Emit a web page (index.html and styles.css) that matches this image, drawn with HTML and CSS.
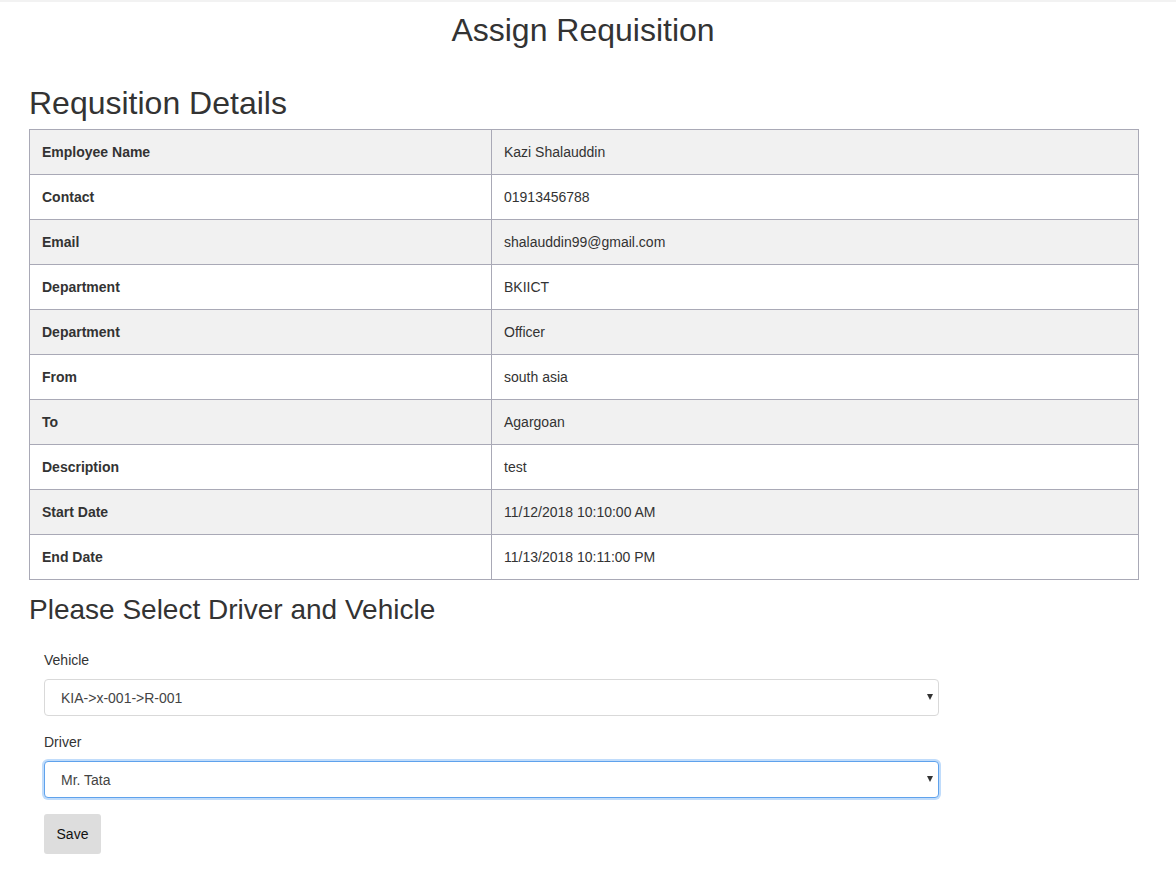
FILE: index.html
```html
<!DOCTYPE html>
<html>
<head>
<meta charset="utf-8">
<title>Assign Requisition</title>
<link rel="stylesheet" href="styles.css">
</head>
<body>
<div class="topbar"></div>
<h1 class="page-title">Assign Requisition</h1>
<div class="container">
  <h2 class="section-title">Requsition Details</h2>
  <table class="details">
    <tbody>
      <tr><th>Employee Name</th><td>Kazi Shalauddin</td></tr>
      <tr><th>Contact</th><td>01913456788</td></tr>
      <tr><th>Email</th><td>shalauddin99@gmail.com</td></tr>
      <tr><th>Department</th><td>BKIICT</td></tr>
      <tr><th>Department</th><td>Officer</td></tr>
      <tr><th>From</th><td>south asia</td></tr>
      <tr><th>To</th><td>Agargoan</td></tr>
      <tr><th>Description</th><td>test</td></tr>
      <tr><th>Start Date</th><td>11/12/2018 10:10:00 AM</td></tr>
      <tr><th>End Date</th><td>11/13/2018 10:11:00 PM</td></tr>
    </tbody>
  </table>
  <h2 class="sub-title">Please Select Driver and Vehicle</h2>
  <form class="assign-form">
    <div class="field">
      <label class="field-label" for="vehicle">Vehicle</label>
      <div class="select-wrap">
        <select id="vehicle" class="select">
          <option>KIA-&gt;x-001-&gt;R-001</option>
        </select>
        <span class="caret"></span>
      </div>
    </div>
    <div class="field">
      <label class="field-label" for="driver">Driver</label>
      <div class="select-wrap">
        <select id="driver" class="select focused">
          <option>Mr. Tata</option>
        </select>
        <span class="caret"></span>
      </div>
    </div>
    <button type="button" class="save-btn">Save</button>
  </form>
</div>
</body>
</html>
```
FILE: styles.css
```css
html, body {
  margin: 0;
  padding: 0;
  background: #fff;
}
body {
  font-family: "Liberation Sans", Arial, sans-serif;
  font-size: 14px;
  color: #333;
}
.topbar {
  height: 2px;
  background: #f2f2f2;
}
.page-title {
  margin: 10px 0 0;
  font-size: 32px;
  line-height: 36px;
  font-weight: normal;
  text-align: center;
  color: #333;
  padding-right: 10px;
}
.container {
  padding-left: 29px;
  width: 1110px;
}
.section-title {
  margin: 37px 0 8px;
  font-size: 32px;
  line-height: 36px;
  font-weight: normal;
  color: #333;
}
.details {
  width: 1110px;
  border-collapse: collapse;
  table-layout: fixed;
}
.details th,
.details td {
  border: 1px solid #a9a9b6;
  padding: 12px 12px;
  line-height: 20px;
  font-size: 14px;
  text-align: left;
  color: #333;
}
.details th {
  width: 437px;
  font-weight: bold;
}
.details tr:nth-child(odd) {
  background: #f1f1f1;
}
.sub-title {
  margin: 14px 0 0;
  font-size: 28px;
  line-height: 31px;
  font-weight: normal;
  color: #333;
}
.assign-form {
  padding: 25px 15px 0;
  width: 895px;
}
.field {
  display: flex;
  flex-direction: column;
  margin-bottom: 16px;
}
.field-label {
  line-height: 20px;
  margin-bottom: 9px;
  color: #333;
}
.select-wrap {
  position: relative;
}
.select {
  appearance: none;
  -webkit-appearance: none;
  display: block;
  width: 895px;
  height: 37px;
  box-sizing: border-box;
  padding: 0 16px;
  border: 1px solid #d9d9d9;
  border-radius: 4px;
  background: #fff;
  font-family: "Liberation Sans", Arial, sans-serif;
  font-size: 14px;
  color: #444;
  outline: none;
}
.select.focused {
  border-color: #5fa2ec;
  box-shadow: 0 0 0 2px #c0dcfb;
}
.caret {
  position: absolute;
  right: 6px;
  top: 15px;
  width: 0;
  height: 0;
  border-left: 3.5px solid transparent;
  border-right: 3.5px solid transparent;
  border-top: 6px solid #333;
  pointer-events: none;
}
.save-btn {
  display: block;
  height: 40px;
  padding: 0 12px;
  border: none;
  border-radius: 3px;
  background: #dddddd;
  font-family: "Liberation Sans", Arial, sans-serif;
  font-size: 14px;
  color: #111;
  width: 57px;
}
```
